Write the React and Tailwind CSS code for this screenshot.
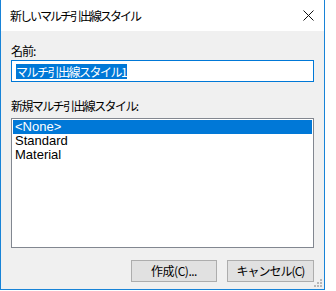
import { useState } from 'react';

const jp = { fontFamily: '"Noto Sans CJK JP", "Liberation Sans", sans-serif' };
const ui = { fontFamily: '"Liberation Sans", "Noto Sans CJK JP", sans-serif' };

function Grip() {
  return (
    <svg width="8" height="8" viewBox="0 0 8 8" className="absolute right-[2px] bottom-[2px]">
      <rect x="6" y="0" width="2" height="2" fill="#b8b8b8" />
      <rect x="3" y="3" width="2" height="2" fill="#b8b8b8" />
      <rect x="6" y="3" width="2" height="2" fill="#b8b8b8" />
      <rect x="0" y="6" width="2" height="2" fill="#b8b8b8" />
      <rect x="3" y="6" width="2" height="2" fill="#b8b8b8" />
      <rect x="6" y="6" width="2" height="2" fill="#b8b8b8" />
    </svg>
  );
}

export default function App() {
  const [selected, setSelected] = useState(0);
  const styles = ['<None>', 'Standard', 'Material'];

  return (
    <div className="w-[336px] h-[291px] bg-white overflow-hidden">
      <div className="w-[325px] h-[290px] flex flex-col border-x border-b border-[#1883d7]">
        <div className="h-[31px] bg-white flex items-center justify-between pl-[9px] pr-[10px] shrink-0">
          <span className="text-[12px] tracking-[-2px] text-black" style={jp}>新しいマルチ引出線スタイル</span>
          <svg width="11" height="11" viewBox="0 0 11 11">
            <path d="M0.5 0.5 L10.5 10.5 M10.5 0.5 L0.5 10.5" stroke="#111" strokeWidth="1" />
          </svg>
        </div>
        <div className="relative flex-1 bg-[#f0f0f0] px-[10px] flex flex-col">
          <div className="mt-[13px] h-[13px] flex items-center text-[12px] tracking-[-1px] text-black" style={jp}>名前:</div>
          <div className="mt-[3px] h-[22px] bg-white border border-[#0078d7] flex items-center px-[4px]">
            <span className="bg-[#0078d7] text-white text-[12px] leading-[15px] tracking-[-1.5px] pr-[1px]" style={jp}>マルチ引出線スタイル1</span>
          </div>
          <div className="mt-[17px] h-[13px] flex items-center text-[12px] tracking-[-1.6px] text-black" style={jp}>新規マルチ引出線スタイル:</div>
          <div className="mt-[6px] h-[130px] bg-white border border-[#828790] p-[1px] flex flex-col">
            {styles.map((s, i) => (
              <div
                key={s}
                onClick={() => setSelected(i)}
                className={`h-[14px] flex items-center pl-[2px] text-[13px] ${i === selected ? 'bg-[#0078d7] text-white' : 'text-black'}`}
                style={ui}
              >
                {s}
              </div>
            ))}
          </div>
          <div className="mt-[12px] flex justify-end gap-[10px]">
            <button className="w-[86px] h-[22px] bg-[#e1e1e1] border border-[#adadad] text-[12px] tracking-[-0.5px] text-black flex items-center justify-center" style={jp}>
              作成(C)...
            </button>
            <button className="w-[87px] h-[22px] bg-[#e1e1e1] border border-[#adadad] text-[12px] tracking-[-1px] text-black flex items-center justify-center" style={jp}>
              キャンセル(C)
            </button>
          </div>
          <Grip />
        </div>
      </div>
    </div>
  );
}
